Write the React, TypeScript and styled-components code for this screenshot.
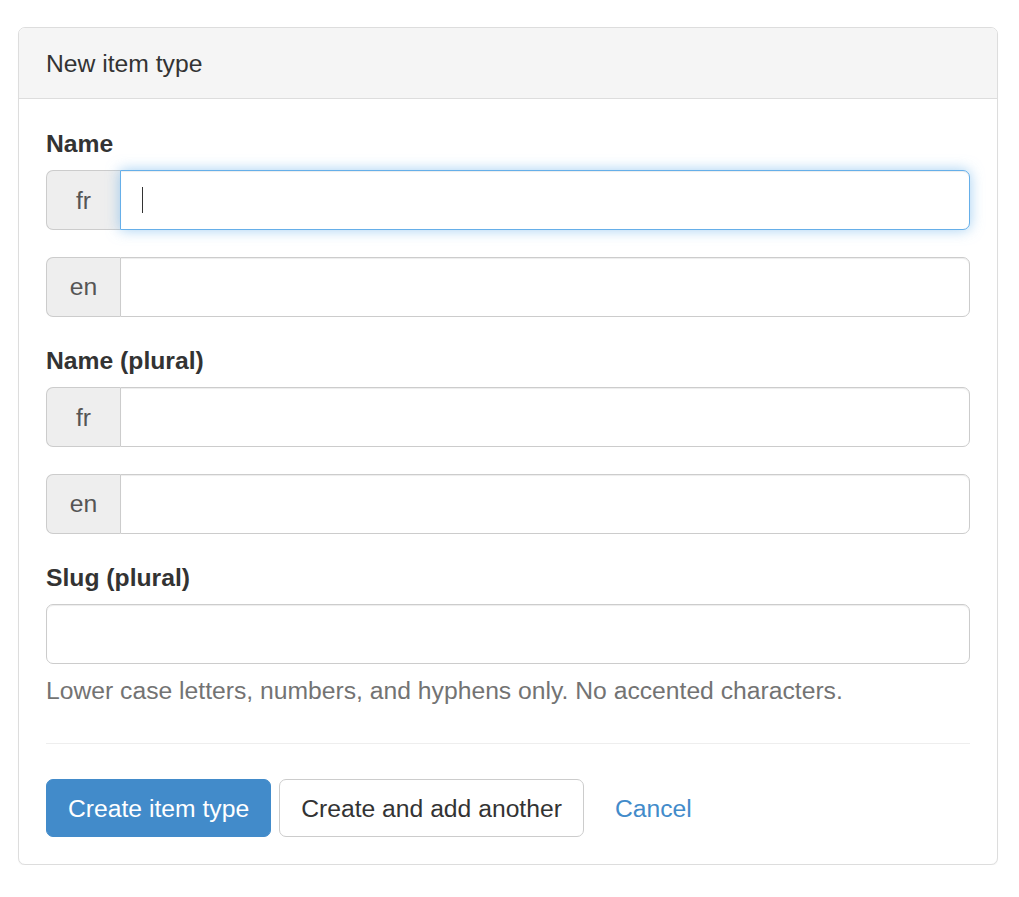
import React from 'react';
import styled, { createGlobalStyle, css } from 'styled-components';

// Bootstrap 3 look, blown up to the screenshot's zoom (~1.76)
const GlobalStyle = createGlobalStyle`
    * { box-sizing: border-box; }
    body {
        margin: 0;
        background: #fff;
        font-family: "Liberation Sans", Arial, Helvetica, sans-serif;
        font-size: 24.7px;
        line-height: 35px;
        color: #333;
    }
`;

const Page = styled.div`
    padding: 27px 21px 0 18px;
`;

const Panel = styled.div`
    border: 1px solid #ddd;
    border-radius: 7px;
    background: #fff;
    box-shadow: 0 1px 1px rgba(0, 0, 0, .05);
`;

const PanelHeading = styled.div`
    padding: 17.5px 27px;
    background: #f5f5f5;
    border-bottom: 1px solid #ddd;
    border-top-left-radius: 6px;
    border-top-right-radius: 6px;
    color: #333;
`;

const PanelBody = styled.form`
    padding: 27px;
`;

const FormGroup = styled.div`
    margin-bottom: 26.5px;
`;

const Label = styled.label`
    display: block;
    font-weight: bold;
    margin-bottom: 9px;
`;

const InputGroup = styled.div`
    display: flex;
    position: relative;
`;

const Addon = styled.span`
    flex: 0 0 74px;
    display: flex;
    align-items: center;
    justify-content: center;
    background: #eee;
    border: 1px solid #ccc;
    border-right: 0;
    border-radius: 7px 0 0 7px;
    color: #555;
`;

const Input = styled.input<{ $focused?: boolean; $grouped?: boolean }>`
    flex: 1;
    display: block;
    width: 100%;
    height: 60px;
    padding: 10px 21px;
    font: inherit;
    color: #555;
    background: #fff;
    border: 1px solid #ccc;
    border-radius: ${(p) => (p.$grouped ? '0 7px 7px 0' : '7px')};
    box-shadow: inset 0 1px 1px rgba(0, 0, 0, .075);
    outline: none;
    ${(p) =>
        p.$focused &&
        css`
            border-color: #66afe9;
            box-shadow: inset 0 1px 1px rgba(0, 0, 0, .075), 0 0 14px rgba(102, 175, 233, .6);
            z-index: 2;
        `}
`;

const Caret = styled.span`
    position: absolute;
    left: 96px;
    top: 17px;
    width: 1px;
    height: 26px;
    background: #333;
    z-index: 3;
`;

const HelpBlock = styled.p`
    margin: 9px 0 17px;
    color: #737373;
`;

const Rule = styled.hr`
    margin: 35px 0;
    border: 0;
    border-top: 1px solid #eee;
`;

const Actions = styled.div`
    display: flex;
    align-items: center;
    gap: 8px;
`;

const Button = styled.button<{ $variant: 'primary' | 'default' | 'link' }>`
    font: inherit;
    height: 58px;
    padding: 0 21px;
    border: 1px solid transparent;
    border-radius: 7px;
    cursor: pointer;
    ${(p) =>
        p.$variant === 'primary'
            ? css`
                  color: #fff;
                  background: #428bca;
                  border-color: #428bca;
              `
            : p.$variant === 'default'
            ? css`
                  color: #333;
                  background: #fff;
                  border-color: #ccc;
              `
            : css`
                  color: #428bca;
                  background: transparent;
                  margin-left: 1px;
              `}
`;

const LangInput = ({ lang, focused }: { lang: string; focused?: boolean }) => (
    <FormGroup>
        <InputGroup>
            <Addon>{lang}</Addon>
            <Input type="text" $grouped $focused={focused} />
            {focused && <Caret />}
        </InputGroup>
    </FormGroup>
);

const App: React.FC = () => (
    <>
        <GlobalStyle />
        <Page>
            <Panel>
                <PanelHeading>New item type</PanelHeading>
                <PanelBody onSubmit={(e) => e.preventDefault()}>
                    <Label>Name</Label>
                    <LangInput lang="fr" focused />
                    <LangInput lang="en" />

                    <Label>Name (plural)</Label>
                    <LangInput lang="fr" />
                    <LangInput lang="en" />

                    <FormGroup>
                        <Label>Slug (plural)</Label>
                        <Input type="text" />
                        <HelpBlock>Lower case letters, numbers, and hyphens only. No accented characters.</HelpBlock>
                    </FormGroup>

                    <Rule />

                    <Actions>
                        <Button $variant="primary">Create item type</Button>
                        <Button $variant="default">Create and add another</Button>
                        <Button $variant="link" type="button">Cancel</Button>
                    </Actions>
                </PanelBody>
            </Panel>
        </Page>
    </>
);

export default App;
